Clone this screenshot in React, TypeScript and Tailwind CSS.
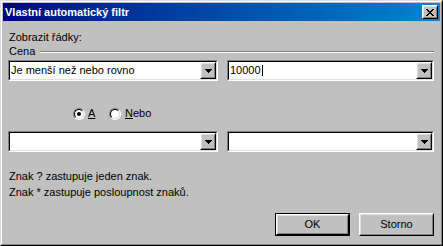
import React from "react";

// pixel map for the classic close "x"
const closeGlyph = [
  "xx....xx",
  ".xx..xx.",
  "..xxxx..",
  "...xx...",
  "..xxxx..",
  ".xx..xx.",
  "xx....xx",
];

const CloseIcon = () => (
  <svg width="8" height="7" viewBox="0 0 8 7" shapeRendering="crispEdges">
    {closeGlyph.map((row, y) =>
      row.split("").map((c, x) =>
        c === "x" ? <rect key={`${x}-${y}`} x={x} y={y} width="1" height="1" fill="#000" /> : null
      )
    )}
  </svg>
);

const ArrowDown = () => (
  <svg width="7" height="4" viewBox="0 0 7 4" shapeRendering="crispEdges">
    <rect x="0" y="0" width="7" height="1" fill="#000" />
    <rect x="1" y="1" width="5" height="1" fill="#000" />
    <rect x="2" y="2" width="3" height="1" fill="#000" />
    <rect x="3" y="3" width="1" height="1" fill="#000" />
  </svg>
);

// raised 3D frame (buttons)
const Raised = ({ className = "", children }: { className?: string; children?: React.ReactNode }) => (
  <div className={`border border-t-white border-l-white border-b-black border-r-black ${className}`}>
    <div className="w-full h-full border border-t-[#dfdfdf] border-l-[#dfdfdf] border-b-[#808080] border-r-[#808080] bg-[#c0c0c0] flex items-center justify-center">
      {children}
    </div>
  </div>
);

const Combo = ({ width, children }: { width: string; children?: React.ReactNode }) => (
  <div className={`${width} h-[21px] border border-t-[#808080] border-l-[#808080] border-b-white border-r-white`}>
    <div className="h-full border border-t-black border-l-black border-b-[#dfdfdf] border-r-[#dfdfdf] bg-white flex">
      <div className="flex-1 flex items-center pl-[1px] text-[11px] leading-[13px] text-black">{children}</div>
      <Raised className="w-[16px] h-full">
        <ArrowDown />
      </Raised>
    </div>
  </div>
);

const Radio = ({ checked }: { checked?: boolean }) => (
  <div className="w-[12px] h-[12px] rounded-full border border-t-[#808080] border-l-[#808080] border-b-white border-r-white">
    <div className="w-full h-full rounded-full border border-t-black border-l-black border-b-[#dfdfdf] border-r-[#dfdfdf] bg-white flex items-center justify-center">
      {checked && <div className="w-[4px] h-[4px] rounded-full bg-black" />}
    </div>
  </div>
);

export default function App() {
  return (
    <div className="w-[443px] h-[246px] font-['Liberation_Sans',Arial,sans-serif] text-[11px] text-black select-none">
      <div className="w-full h-full border border-t-[#dfdfdf] border-l-[#dfdfdf] border-b-black border-r-black">
        <div className="w-full h-full border border-t-white border-l-white border-b-[#808080] border-r-[#808080] bg-[#c0c0c0] p-[1px] flex flex-col">
          {/* Title bar */}
          <div className="h-[18px] bg-linear-to-r from-[#000080] to-[#1084d0] flex items-center justify-between pl-[2px] pr-[2px]">
            <span className="text-white font-bold text-[11px] leading-[13px]">Vlastní automatický filtr</span>
            <Raised className="w-[16px] h-[14px]">
              <CloseIcon />
            </Raised>
          </div>

          {/* Body */}
          <div className="flex-1 flex flex-col pl-[5px] pr-[6px] pt-[10px]">
            <div className="ml-[1px] leading-[13px]">Zobrazit řádky:</div>
            <div className="ml-[1px] mt-[1px] h-[13px] flex items-center">
              <span className="w-[31px] leading-[13px]">Cena</span>
              <div className="flex-1 flex flex-col">
                <div className="h-[1px] bg-[#808080]" />
                <div className="h-[1px] bg-white" />
              </div>
            </div>

            <div className="mt-[2px] flex gap-[9px]">
              <Combo width="w-[210px]">Je menší než nebo rovno</Combo>
              <Combo width="w-[207px]">
                <span>10000</span>
                <span className="ml-[1px] w-[1px] h-[11px] bg-black" />
              </Combo>
            </div>

            <div className="mt-[26px] h-[13px] flex items-center pl-[65px]">
              <div className="w-[36px] flex items-center gap-[3px]">
                <Radio checked />
                <span className="leading-[13px]">
                  <span className="underline">A</span>
                </span>
              </div>
              <div className="flex items-center gap-[4px]">
                <Radio />
                <span className="leading-[13px]">
                  <span className="underline">N</span>ebo
                </span>
              </div>
            </div>

            <div className="mt-[11px] flex gap-[9px]">
              <Combo width="w-[210px]" />
              <Combo width="w-[207px]" />
            </div>

            <div className="mt-[16px] ml-[1px] leading-[16px]">
              <div>Znak ? zastupuje jeden znak.</div>
              <div>Znak * zastupuje posloupnost znaků.</div>
            </div>

            <div className="mt-[13px] flex justify-end gap-[9px]">
              <div className="w-[75px] h-[23px] border border-black">
                <Raised className="w-full h-full">
                  <span className="leading-[13px]">OK</span>
                </Raised>
              </div>
              <Raised className="w-[75px] h-[23px]">
                <span className="leading-[13px]">Storno</span>
              </Raised>
            </div>
          </div>
        </div>
      </div>
    </div>
  );
}
